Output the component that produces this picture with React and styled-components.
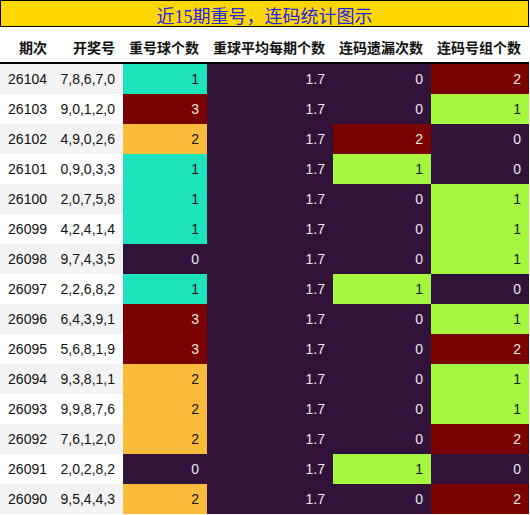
import React from "react";
import styled, { createGlobalStyle } from "styled-components";

const GlobalStyle = createGlobalStyle`
  html, body {
    margin: 0;
    padding: 0;
    background: #fff;
  }
`;

const COLORS = {
  purple: "#31133a",
  teal: "#1ce3b9",
  orange: "#f8bb3a",
  red: "#7a0202",
  lime: "#a5f83d",
};

const COLS = "55px 68px 84px 126px 98px 98px";

const Wrapper = styled.div`
  width: 529px;
  font-family: "Liberation Sans", "Noto Sans CJK SC", sans-serif;
`;

const TitleBar = styled.div`
  height: 27px;
  box-sizing: border-box;
  border: 1px solid #000;
  background: #ffd700;
  color: #2424e8;
  font-family: "Liberation Serif", "Noto Sans CJK SC", serif;
  font-size: 18px;
  display: flex;
  align-items: center;
  justify-content: center;
  padding-top: 2px;
`;

const HeaderRow = styled.div`
  display: grid;
  grid-template-columns: ${COLS};
  height: 35px;
  border-bottom: 2px solid #000;
  background: #fff;
`;

const HeaderCell = styled.div`
  display: flex;
  align-items: center;
  justify-content: flex-end;
  padding-top: 5px;
  padding-right: 8px;
  font-family: "Noto Sans CJK SC", sans-serif;
  font-weight: bold;
  font-size: 14px;
  color: #111;
  white-space: nowrap;
`;

const Row = styled.div`
  display: grid;
  grid-template-columns: ${COLS};
  height: 30px;
  background: ${(p) => (p.$striped ? "#f3f3f3" : "#fff")};
`;

const Cell = styled.div`
  display: flex;
  align-items: center;
  justify-content: flex-end;
  padding-right: 8px;
  font-size: 14px;
  color: ${(p) => (p.$light ? "#e8e8e8" : "#111")};
  background: ${(p) => p.$bg || "transparent"};
`;

const rows = [
  ["26104", "7,8,6,7,0", 1, 0, 2],
  ["26103", "9,0,1,2,0", 3, 0, 1],
  ["26102", "4,9,0,2,6", 2, 2, 0],
  ["26101", "0,9,0,3,3", 1, 1, 0],
  ["26100", "2,0,7,5,8", 1, 0, 1],
  ["26099", "4,2,4,1,4", 1, 0, 1],
  ["26098", "9,7,4,3,5", 0, 0, 1],
  ["26097", "2,2,6,8,2", 1, 1, 0],
  ["26096", "6,4,3,9,1", 3, 0, 1],
  ["26095", "5,6,8,1,9", 3, 0, 2],
  ["26094", "9,3,8,1,1", 2, 0, 1],
  ["26093", "9,9,8,7,6", 2, 0, 1],
  ["26092", "7,6,1,2,0", 2, 0, 2],
  ["26091", "2,0,2,8,2", 0, 1, 0],
  ["26090", "9,5,4,4,3", 2, 0, 2],
];

const repeatColor = [COLORS.purple, COLORS.teal, COLORS.orange, COLORS.red];
const linkColor = [COLORS.purple, COLORS.lime, COLORS.red];
const isDark = (c) => c === COLORS.purple || c === COLORS.red;

const ColorCell = ({ bg, children }) => (
  <Cell $bg={bg} $light={isDark(bg)}>
    {children}
  </Cell>
);

const headers = ["期次", "开奖号", "重号球个数", "重球平均每期个数", "连码遗漏次数", "连码号组个数"];

export default function App() {
  return (
    <Wrapper>
      <GlobalStyle />
      <TitleBar>近15期重号，连码统计图示</TitleBar>
      <HeaderRow>
        {headers.map((h) => (
          <HeaderCell key={h}>{h}</HeaderCell>
        ))}
      </HeaderRow>
      {rows.map(([issue, nums, rep, miss, groups], i) => (
        <Row key={issue} $striped={i % 2 === 0}>
          <Cell>{issue}</Cell>
          <Cell>{nums}</Cell>
          <ColorCell bg={repeatColor[rep]}>{rep}</ColorCell>
          <ColorCell bg={COLORS.purple}>1.7</ColorCell>
          <ColorCell bg={linkColor[miss]}>{miss}</ColorCell>
          <ColorCell bg={linkColor[groups]}>{groups}</ColorCell>
        </Row>
      ))}
    </Wrapper>
  );
}
